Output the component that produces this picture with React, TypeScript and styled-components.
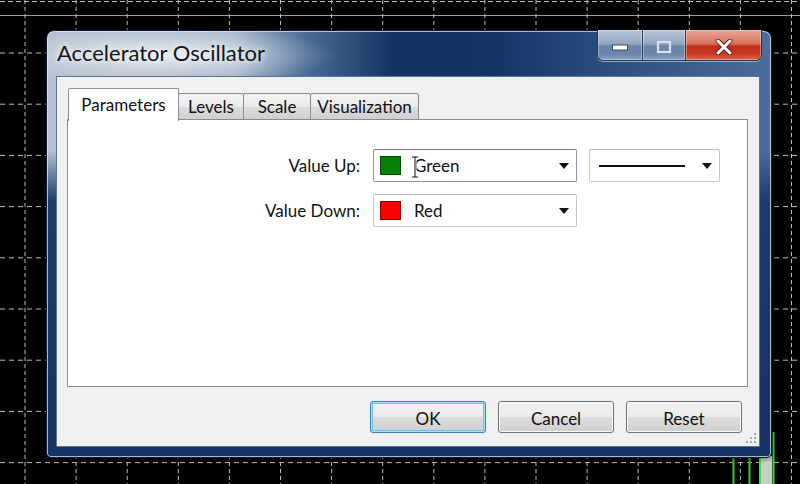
import React from "react";
import styled, { createGlobalStyle } from "styled-components";

const Global = createGlobalStyle`
  html, body { margin: 0; padding: 0; background: #000; }
  body { width: 800px; height: 484px; overflow: hidden; font-family: Lato, "Open Sans", sans-serif; }
  * { box-sizing: border-box; }
`;

const Screen = styled.div`
  position: relative;
  width: 800px;
  height: 484px;
  background: #000;
  overflow: hidden;
`;

const Chart = styled.svg`
  position: absolute;
  left: 0;
  top: 0;
`;

const Window = styled.div`
  position: absolute;
  left: 46px;
  top: 30px;
  width: 726px;
  height: 428px;
  border-radius: 8px 8px 5px 5px;
  border: 1px solid #0c1b33;
  box-shadow: inset 0 0 0 1px rgba(215, 230, 245, 0.75), 0 0 6px rgba(0, 0, 0, 0.6);
  background:
    radial-gradient(ellipse 170px 30px at 120px 24px, rgba(255, 255, 255, 0.7), rgba(255, 255, 255, 0) 100%),
    linear-gradient(to bottom, rgba(26, 59, 107, 0) 0%, rgba(26, 59, 107, 0) 28%, #1b3c6c 40%, #163465 100%),
    linear-gradient(to right, #b3c1d1 0%, #a0b2c7 26%, #4a6a95 36%, #14325f 48%, #153565 62%, #2a4c7d 76%, #4b6e9c 100%);
  display: flex;
  flex-direction: column;
  padding: 0 11px 10px 9px;
`;

const TitleBar = styled.div`
  height: 45px;
  margin: 0 -11px 0 -9px;
  padding: 0 9px 0 10px;
  display: flex;
  align-items: flex-start;
`;

const Title = styled.div`
  margin-top: 8px;
  font-size: 22px;
  color: #161616;
  text-shadow: 0 0 6px rgba(255, 255, 255, 0.85), 0 0 10px rgba(255, 255, 255, 0.6);
`;

const CaptionGroup = styled.div`
  margin-left: auto;
  margin-top: -1px;
  display: flex;
  height: 31px;
  border: 1px solid #24344e;
  border-top: none;
  border-radius: 0 0 6px 6px;
  overflow: hidden;
  box-shadow: 0 1px 0 rgba(210, 225, 245, 0.6);
`;

const CaptionButton = styled.div<{ $w: number; $close?: boolean; $first?: boolean }>`
  width: ${(p) => p.$w}px;
  height: 100%;
  display: flex;
  align-items: center;
  justify-content: center;
  padding-top: 3px;
  border-left: ${(p) => (p.$first ? "none" : "1px solid #2a3a55")};
  box-shadow: inset 0 0 0 1px rgba(255, 255, 255, 0.35);
  background: ${(p) =>
    p.$close
      ? "linear-gradient(to bottom, #e9a596 0%, #d8735f 45%, #c22c16 55%, #c73a22 80%, #e06a4d 100%)"
      : "linear-gradient(to bottom, #b7c5d7 0%, #93a7c1 45%, #6c85a7 55%, #6b86a8 80%, #8aa4c4 100%)"};
`;

const Client = styled.div`
  position: relative;
  flex: 1;
  background: #f0f0f0;
  border: 1px solid #5d7393;
  padding: 11px 11px 0 10px;
  display: flex;
  flex-direction: column;
`;

const TabRow = styled.div`
  display: flex;
  align-items: flex-end;
  height: 32px;
  padding-left: 1px;
  position: relative;
  z-index: 2;
`;

const Tab = styled.div<{ $w: number; $active?: boolean }>`
  width: ${(p) => p.$w}px;
  height: ${(p) => (p.$active ? 33 : 27)}px;
  margin-bottom: ${(p) => (p.$active ? -1 : 0)}px;
  margin-left: ${(p) => (p.$active ? 0 : -1)}px;
  border: 1px solid #898c95;
  border-bottom: ${(p) => (p.$active ? "none" : "1px solid #898c95")};
  border-radius: 2px 2px 0 0;
  background: ${(p) =>
    p.$active ? "#ffffff" : "linear-gradient(to bottom, #f3f3f3 0%, #ebebeb 50%, #dddddd 51%, #cfcfcf 100%)"};
  display: flex;
  align-items: center;
  justify-content: center;
  font-size: 17px;
  color: #111;
  padding-bottom: ${(p) => (p.$active ? 2 : 0)}px;
  &:first-child { margin-left: 0; }
`;

const Panel = styled.div`
  height: 268px;
  border: 1px solid #898c95;
  background: #ffffff;
  margin-top: -1px;
  padding-top: 29px;
`;

const Form = styled.div`
  display: grid;
  grid-template-columns: 293px 204px 131px;
  column-gap: 12px;
  row-gap: 12px;
  align-items: center;
`;

const Label = styled.div`
  text-align: right;
  font-size: 17px;
  color: #111;
  padding-right: 1px;
`;

const Combo = styled.div<{ $focus?: boolean }>`
  position: relative;
  height: 33px;
  background: #fff;
  border: 1px solid ${(p) => (p.$focus ? "#8a95a3" : "#c4c7cc")};
  border-top-color: ${(p) => (p.$focus ? "#6f7b8c" : "#b8bcc2")};
  border-radius: 2px;
  display: flex;
  align-items: center;
  padding: 0 6px;
  font-size: 17px;
  color: #111;
`;

const Swatch = styled.div<{ $c: string }>`
  width: 21px;
  height: 19px;
  background: ${(p) => p.$c};
  border: 1px solid rgba(0, 0, 0, 0.45);
  margin-right: 13px;
`;

const ComboText = styled.span`
  flex: 1;
`;

const LineSample = styled.div`
  width: 86px;
  height: 2px;
  background: #111;
  margin-left: 3px;
  margin-right: auto;
`;

const Arrow = styled.svg`
  flex: none;
`;

const IBeam = styled.svg`
  position: absolute;
  left: 37px;
  top: 6px;
`;

const ButtonRow = styled.div`
  display: flex;
  justify-content: flex-end;
  gap: 12px;
  padding: 14px 6px 0 0;
`;

const Button = styled.div<{ $default?: boolean }>`
  width: 116px;
  height: 32px;
  border: 1px solid ${(p) => (p.$default ? "#3c7fb1" : "#707070")};
  border-radius: 3px;
  background: linear-gradient(to bottom, #f2f2f2 0%, #ebebeb 50%, #dddddd 51%, #cfcfcf 100%);
  box-shadow: ${(p) =>
    p.$default ? "inset 0 0 0 1px #a8e0f6, inset 0 0 0 2px #6cc3ea" : "inset 0 0 0 1px #fbfbfb"};
  display: flex;
  align-items: center;
  justify-content: center;
  padding-top: 2px;
  font-size: 17px;
  color: #111;
`;

const Grip = styled.svg`
  position: absolute;
  right: 2px;
  bottom: 2px;
`;

const DownArrow = () => (
  <Arrow width="12" height="8" viewBox="0 0 12 8">
    <path d="M1 1 L11 1 L6 7 Z" fill="#111" />
  </Arrow>
);

const ChartGrid = () => {
  const xs: number[] = [];
  for (let k = 0; k < 16; k++) xs.push(25 + k * 51.1);
  const ys: number[] = [];
  for (let k = 0; k < 9; k++) ys.push(53 + k * 51.2);
  return (
    <Chart width="800" height="484" viewBox="0 0 800 484">
      <line x1="0" y1="1.5" x2="800" y2="1.5" stroke="#bdbdbd" strokeWidth="1" strokeDasharray="5 3" />
      <line x1="0" y1="15.5" x2="800" y2="15.5" stroke="#9c9c9c" strokeWidth="1" />
      {xs.map((x) => (
        <line key={"v" + x} x1={x} y1="0" x2={x} y2="484" stroke="#bdbdbd" strokeWidth="1" strokeDasharray="4 3" />
      ))}
      {ys.map((y) => (
        <line key={"h" + y} x1="0" y1={y} x2="800" y2={y} stroke="#bdbdbd" strokeWidth="1" strokeDasharray="5 4" />
      ))}
      <line x1="733.5" y1="458" x2="733.5" y2="484" stroke="#2fcf2f" strokeWidth="2" />
      <line x1="749.5" y1="458" x2="749.5" y2="484" stroke="#2fcf2f" strokeWidth="2" />
      <rect x="761" y="456" width="11" height="28" fill="#e8f5e8" opacity="0.85" />
      <line x1="760" y1="440" x2="760" y2="484" stroke="#3ee03e" strokeWidth="2" />
      <line x1="773.5" y1="432" x2="773.5" y2="484" stroke="#3ee03e" strokeWidth="2" />
    </Chart>
  );
};

const gripDots: [number, number][] = [
  [10, 2], [10, 6], [6, 6], [10, 10], [6, 10], [2, 10],
];

export default function App() {
  return (
    <>
      <Global />
      <Screen>
        <ChartGrid />
        <Window>
          <TitleBar>
            <Title>Accelerator Oscillator</Title>
            <CaptionGroup>
              <CaptionButton $w={44} $first>
                <svg width="18" height="8" viewBox="0 0 18 8">
                  <rect x="1.5" y="2" width="15" height="5" fill="#fff" stroke="#3a4c66" strokeWidth="1" />
                </svg>
              </CaptionButton>
              <CaptionButton $w={43}>
                <svg width="16" height="14" viewBox="0 0 16 14">
                  <rect x="2" y="2" width="12" height="10" fill="none" stroke="#d8e2ee" strokeWidth="2.2" />
                </svg>
              </CaptionButton>
              <CaptionButton $w={76} $close>
                <svg width="18" height="16" viewBox="0 0 18 16">
                  <path d="M3 2 L15 14 M15 2 L3 14" stroke="#5a1a10" strokeWidth="4.6" strokeLinecap="round" />
                  <path d="M3 2 L15 14 M15 2 L3 14" stroke="#ffffff" strokeWidth="3" strokeLinecap="round" />
                </svg>
              </CaptionButton>
            </CaptionGroup>
          </TitleBar>
          <Client>
            <TabRow>
              <Tab $w={111} $active>Parameters</Tab>
              <Tab $w={66}>Levels</Tab>
              <Tab $w={68}>Scale</Tab>
              <Tab $w={109}>Visualization</Tab>
            </TabRow>
            <Panel>
              <Form>
                <Label>Value Up:</Label>
                <Combo $focus>
                  <Swatch $c="#078007" />
                  <ComboText>Green</ComboText>
                  <DownArrow />
                  <IBeam width="8" height="22" viewBox="0 0 8 22">
                    <path d="M1 1 H7 M4 1 V21 M1 21 H7" stroke="#fff" strokeWidth="3" />
                    <path d="M1 1 H7 M4 1 V21 M1 21 H7" stroke="#111" strokeWidth="1" />
                  </IBeam>
                </Combo>
                <Combo>
                  <LineSample />
                  <DownArrow />
                </Combo>
                <Label>Value Down:</Label>
                <Combo>
                  <Swatch $c="#ff0000" />
                  <ComboText>Red</ComboText>
                  <DownArrow />
                </Combo>
              </Form>
            </Panel>
            <ButtonRow>
              <Button $default>OK</Button>
              <Button>Cancel</Button>
              <Button>Reset</Button>
            </ButtonRow>
            <Grip width="12" height="12" viewBox="0 0 12 12">
              {gripDots.map(([x, y]) => (
                <rect key={x + "-" + y} x={x - 1} y={y - 1} width="2" height="2" fill="#a9a9a9" />
              ))}
            </Grip>
          </Client>
        </Window>
      </Screen>
    </>
  );
}
